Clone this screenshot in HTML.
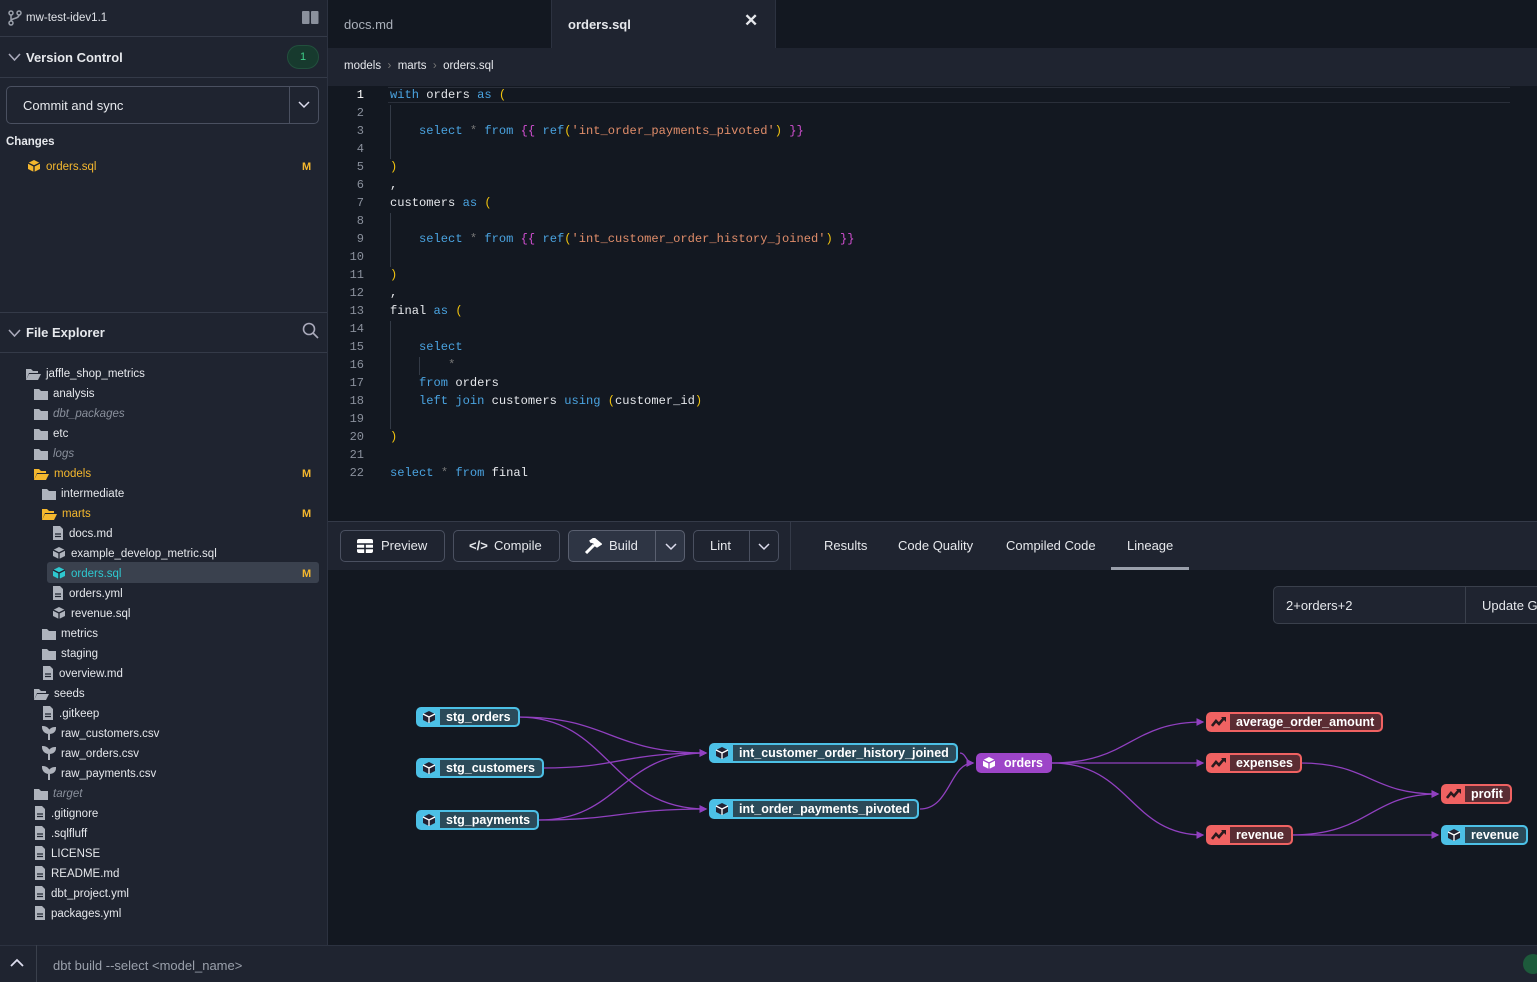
<!DOCTYPE html>
<html><head><meta charset="utf-8"><style>
*{box-sizing:border-box;margin:0;padding:0}
body{width:1537px;height:982px;overflow:hidden;background:#131821;font-family:"Liberation Sans",sans-serif;color:#e6e8ec;position:relative;font-size:12px}
.abs{position:absolute}
#side{left:0;top:0;width:328px;height:945px;background:#1f2430;border-right:1px solid #2c3240}
.hr{position:absolute;left:0;width:327px;height:1px;background:#343a48}
.row{position:absolute;height:20px;line-height:20px;font-size:11.5px;color:#e6e8ec;white-space:nowrap}
.row svg{vertical-align:-3px;margin-right:5px}
.M{position:absolute;left:302px;color:#f5b82e;font-weight:bold;font-size:11px}
.code{position:absolute;left:390px;font-family:"Liberation Mono",monospace;font-size:12.1px;white-space:pre;color:#e6e8ec}
.ln{position:absolute;width:34px;left:330px;text-align:right;font-family:"Liberation Mono",monospace;font-size:12px;color:#8a909c}
.k{color:#4aa3e0}.y{color:#f2c40f}.p{color:#d14fd1}.s{color:#e08d6a}.g{color:#777}
.btn{position:absolute;top:530px;height:32px;border:1px solid #4a5060;border-radius:5px;font-size:13px;line-height:30px;color:#e6e8ec}
.node{position:absolute;height:20px;border-radius:5px;border:2px solid;display:flex;font-weight:bold;font-size:12.5px;color:#fff;overflow:hidden}
.node .i{width:22px;display:flex;align-items:center;justify-content:center}
.node .t{padding:0 7px 0 6px;line-height:16px;border-radius:0 3px 3px 0}
.b{border-color:#4cc0e6;background:#4cc0e6}.b .t{background:#2b4a59}
.r{border-color:#f06262;background:#f06262}.r .t{background:#5a2c33}
.tab{position:absolute;top:538px;font-size:13px;color:#e6e8ec}
</style></head><body>
<div id="side" class="abs">
 <svg class="abs" style="left:8px;top:10px" width="14" height="16" viewBox="0 0 14 16" fill="none" stroke="#9aa0ab" stroke-width="1.5"><circle cx="3" cy="3" r="2"/><circle cx="3" cy="13" r="2"/><circle cx="11" cy="3" r="2"/><path d="M3 5v6M11 5c0 4-8 3-8 6"/></svg>
 <div class="abs" style="left:26px;top:12px;font-size:11.5px;color:#dfe2e7">mw-test-idev1.1</div>
 <svg class="abs" style="left:302px;top:11px" width="17" height="13"><rect x="0" y="0" width="7.5" height="13" rx="1" fill="#8a909c"/><rect x="9" y="0" width="7.5" height="13" rx="1" fill="#8a909c"/></svg>
 <div class="hr" style="top:36px"></div>
 <svg class="abs" style="left:8px;top:53px" width="13" height="9"><path d="M1 1l5.5 6L12 1" stroke="#aab" stroke-width="1.6" fill="none"/></svg>
 <div class="abs" style="left:26px;top:50px;font-size:13px;font-weight:bold">Version Control</div>
 <div class="abs" style="left:287px;top:45px;width:32px;height:24px;border-radius:12px;background:#173a2e;border:1px solid #22503d;color:#3fd08a;font-size:11px;text-align:center;line-height:22px">1</div>
 <div class="hr" style="top:77px"></div>
 <div class="abs" style="left:6px;top:86px;width:313px;height:38px;border:1px solid #4a5060;border-radius:5px"></div>
 <div class="abs" style="left:23px;top:98px;font-size:13px">Commit and sync</div>
 <div class="abs" style="left:289px;top:87px;width:1px;height:36px;background:#4a5060"></div>
 <svg class="abs" style="left:298px;top:101px" width="12" height="8"><path d="M1 1l5 5 5-5" stroke="#dde" stroke-width="1.5" fill="none"/></svg>
 <div class="abs" style="left:6px;top:136px;font-size:11.5px;font-weight:bold">Changes</div>
 <div class="row" style="left:27px;top:157px;color:#f5b82e"><svg width="14" height="14" viewBox="0 0 14 14"><path d="M7 1l6 3v6l-6 3-6-3V4z" fill="#f5b82e"/><path d="M1 4l6 3 6-3M7 7v6" stroke="#1f2430" stroke-width="1.3" fill="none"/></svg>orders.sql</div>
 <div class="M" style="top:161px">M</div>
 <div class="hr" style="top:312px"></div>
 <svg class="abs" style="left:8px;top:329px" width="13" height="9"><path d="M1 1l5.5 6L12 1" stroke="#aab" stroke-width="1.6" fill="none"/></svg>
 <div class="abs" style="left:26px;top:325px;font-size:13px;font-weight:bold">File Explorer</div>
 <svg class="abs" style="left:302px;top:322px" width="17" height="17"><circle cx="7" cy="7" r="5.5" stroke="#aab" stroke-width="1.6" fill="none"/><path d="M11 11l5 5" stroke="#aab" stroke-width="1.6"/></svg>
 <div class="hr" style="top:352px"></div>
 <div class="abs" style="left:47px;top:562px;width:272px;height:21px;background:#3a414e;border-radius:3px"></div>
 <div id="tree"></div>
 <div class="M" style="top:468px">M</div><div class="M" style="top:508px">M</div><div class="M" style="top:568px">M</div>
</div>
<div class="abs" style="left:0;top:945px;width:1537px;height:37px;background:#1f2430;border-top:1px solid #2c3240"></div>
<div class="abs" style="left:36px;top:945px;width:1px;height:37px;background:#3a404c"></div>
<svg class="abs" style="left:10px;top:958px" width="14" height="9"><path d="M1 8l6-6 6 6" stroke="#dde" stroke-width="1.8" fill="none"/></svg>
<div class="abs" style="left:53px;top:958px;font-size:13px;color:#9aa0ab">dbt build --select &lt;model_name&gt;</div>
<div class="abs" style="left:1523px;top:954px;width:20px;height:20px;border-radius:10px;background:#1d5a3b"></div>
<div class="abs" style="left:328px;top:0;width:1209px;height:48px;background:#131821"></div>
<div class="abs" style="left:344px;top:17px;font-size:13px;color:#aab0ba">docs.md</div>
<div class="abs" style="left:551px;top:0;width:225px;height:48px;background:#1f2430;border-left:1px solid #2c3240;border-right:1px solid #2c3240"></div>
<div class="abs" style="left:568px;top:17px;font-size:13px;font-weight:bold">orders.sql</div>
<div class="abs" style="left:744px;top:11px;font-size:17px;font-weight:bold">✕</div>
<div class="abs" style="left:328px;top:48px;width:1209px;height:38px;background:#1f2430"></div>
<div class="abs" style="left:344px;top:60px;font-size:11.5px">models <span style="color:#777">&nbsp;›&nbsp;</span> marts <span style="color:#777">&nbsp;›&nbsp;</span> orders.sql</div>
<div class="abs" style="left:388px;top:87px;width:1122px;height:16px;border-top:1px solid #2a2f3a;border-bottom:1px solid #2a2f3a"></div>
<div class="abs" style="left:390px;top:105px;width:1px;height:54px;background:#333a46"></div>
<div class="abs" style="left:390px;top:213px;width:1px;height:54px;background:#333a46"></div>
<div class="abs" style="left:390px;top:321px;width:1px;height:108px;background:#333a46"></div>
<div class="abs" style="left:419px;top:357px;width:1px;height:18px;background:#333a46"></div>
<div id="code"></div>
<div class="abs" style="left:328px;top:521px;width:1209px;height:49px;background:#1f2430;border-top:1px solid #343a48"></div>
<div class="abs" style="left:790px;top:522px;width:1px;height:48px;background:#343a48"></div>
<div class="btn" style="left:340px;width:105px;padding-left:40px"><svg class="abs" style="left:16px;top:8px" width="16" height="14"><rect width="16" height="14" rx="2" fill="#fff"/><path d="M0 5h16M0 9.5h16M8 5v9" stroke="#1f2430" stroke-width="1.6"/></svg>Preview</div>
<div class="btn" style="left:453px;width:107px;padding-left:40px"><span class="abs" style="left:15px;top:0;font-size:13px;font-weight:bold">&lt;/&gt;</span>Compile</div>
<div class="btn" style="left:568px;width:117px;background:#2e3544;border-color:#5a6070;padding-left:40px"><svg class="abs" style="left:15px;top:7px" width="18" height="16"><path d="M2 15l8-8M6 4l4-3 6 5-3 2-3-2" stroke="#fff" stroke-width="3" fill="#fff"/></svg>Build<div class="abs" style="left:86px;top:0;width:1px;height:30px;background:#5a6070"></div><svg class="abs" style="left:96px;top:12px" width="12" height="8"><path d="M1 1l5 5 5-5" stroke="#dde" stroke-width="1.5" fill="none"/></svg></div>
<div class="btn" style="left:693px;width:86px;padding-left:16px">Lint<div class="abs" style="left:55px;top:0;width:1px;height:30px;background:#4a5060"></div><svg class="abs" style="left:64px;top:12px" width="12" height="8"><path d="M1 1l5 5 5-5" stroke="#dde" stroke-width="1.5" fill="none"/></svg></div>
<div class="tab" style="left:824px">Results</div>
<div class="tab" style="left:898px">Code Quality</div>
<div class="tab" style="left:1006px">Compiled Code</div>
<div class="tab" style="left:1127px">Lineage</div>
<div class="abs" style="left:1111px;top:567px;width:78px;height:3px;background:#9aa0ab"></div>
<div class="abs" style="left:1273px;top:586px;width:280px;height:38px;border:1px solid #3a404c;border-radius:5px;background:#1f2430"></div>
<div class="abs" style="left:1465px;top:587px;width:1px;height:36px;background:#3a404c"></div>
<div class="abs" style="left:1286px;top:598px;font-size:13px">2+orders+2</div>
<div class="abs" style="left:1482px;top:598px;font-size:13px;white-space:nowrap">Update Graph</div>
<svg class="abs" style="left:0;top:0" width="1537" height="982" fill="none" stroke="#9140c0" stroke-width="1.3">
<defs><marker id="a" markerWidth="6" markerHeight="6" refX="5" refY="3" orient="auto"><path d="M0 0L6 3 0 6z" fill="#9140c0" stroke="none"/></marker></defs>
<g marker-end="url(#a)">
<path d="M518 717C610 717 610 753 706 753"/>
<path d="M518 717C610 717 610 809 706 809"/>
<path d="M543 768C620 768 620 753 706 753"/>
<path d="M539 820C620 820 620 753 706 753"/>
<path d="M539 820C620 820 620 809 706 809"/>
<path d="M960 753C966 753 966 763 973 763"/>
<path d="M920 809C950 809 950 763 973 763"/>
<path d="M1052 763C1130 763 1130 722 1203 722"/>
<path d="M1052 763H1203"/>
<path d="M1052 763C1130 763 1130 835 1203 835"/>
<path d="M1300 763C1370 763 1370 794 1438 794"/>
<path d="M1291 835C1370 835 1370 794 1438 794"/>
<path d="M1291 835H1438"/>
</g></svg>
<div id="nodes"></div>
<script>
var t=[[26,372,'jaffle_shop_metrics','fo',''],[34,392,'analysis','f',''],[34,412,'dbt_packages','f','i'],[34,432,'etc','f',''],[34,452,'logs','f','i'],[34,472,'models','fo','o'],[42,492,'intermediate','f',''],[42,512,'marts','fo','o'],[52,532,'docs.md','d',''],[52,552,'example_develop_metric.sql','c',''],[52,572,'orders.sql','c','c'],[52,592,'orders.yml','d',''],[52,612,'revenue.sql','c',''],[42,632,'metrics','f',''],[42,652,'staging','f',''],[42,672,'overview.md','d',''],[34,692,'seeds','fo',''],[42,712,'.gitkeep','d',''],[42,732,'raw_customers.csv','s',''],[42,752,'raw_orders.csv','s',''],[42,772,'raw_payments.csv','s',''],[34,792,'target','f','i'],[34,812,'.gitignore','d',''],[34,832,'.sqlfluff','d',''],[34,852,'LICENSE','d',''],[34,872,'README.md','d',''],[34,892,'dbt_project.yml','d',''],[34,912,'packages.yml','d','']];
var h='';t.forEach(function(r){var col=r[4]=='o'?'#f5b82e':r[4]=='c'?'#2ec8d0':'#aeb3bc';var tc=r[4]=='o'?'#f5b82e':r[4]=='c'?'#2ec8d0':r[4]=='i'?'#8a909c':'#e6e8ec';var ic;
if(r[3]=='f')ic='<svg width="14" height="12"><path d="M0 1h5l2 2h7v9H0z" fill="'+col+'"/></svg>';
else if(r[3]=='fo')ic='<svg width="15" height="12"><path d="M0 1h5l2 2h5v2H3L0 12z" fill="'+col+'"/><path d="M3 6h12l-3 6H0z" fill="'+col+'"/></svg>';
else if(r[3]=='d')ic='<svg width="12" height="14"><path d="M1 0h7l3 3v11H1z" fill="'+col+'"/><path d="M3 8h6M3 10.5h6" stroke="#1f2430" stroke-width="1.2"/></svg>';
else if(r[3]=='s')ic='<svg width="14" height="14"><path d="M7 14V7M7 7C7 3 4 1 1 1c0 3 2 6 6 6M7 7c0-3 3-5 6-5 0 3-2 5-6 5" stroke="'+col+'" stroke-width="2" fill="'+col+'"/></svg>';
else ic='<svg width="14" height="14" viewBox="0 0 14 14"><path d="M7 1l6 3v6l-6 3-6-3V4z" fill="'+col+'"/><path d="M1 4l6 3 6-3M7 7v6" stroke="#1f2430" stroke-width="1.3" fill="none"/></svg>';
h+='<div class="row" style="left:'+r[0]+'px;top:'+(r[1]-8)+'px;color:'+tc+(r[4]=='i'?';font-style:italic':'')+'">'+ic+r[2]+'</div>';});
document.getElementById('tree').innerHTML=h;
var c=['<span class="k">with</span> orders <span class="k">as</span> <span class="y">(</span>','','    <span class="k">select</span> <span class="g">*</span> <span class="k">from</span> <span class="p">{{</span> <span class="k">ref</span><span class="y">(</span><span class="s">\'int_order_payments_pivoted\'</span><span class="y">)</span> <span class="p">}}</span>','','<span class="y">)</span>',',','customers <span class="k">as</span> <span class="y">(</span>','','    <span class="k">select</span> <span class="g">*</span> <span class="k">from</span> <span class="p">{{</span> <span class="k">ref</span><span class="y">(</span><span class="s">\'int_customer_order_history_joined\'</span><span class="y">)</span> <span class="p">}}</span>','','<span class="y">)</span>',',','final <span class="k">as</span> <span class="y">(</span>','','    <span class="k">select</span>','        <span class="g">*</span>','    <span class="k">from</span> orders','    <span class="k">left join</span> customers <span class="k">using</span> <span class="y">(</span>customer_id<span class="y">)</span>','','<span class="y">)</span>','','<span class="k">select</span> <span class="g">*</span> <span class="k">from</span> final'];
h='';c.forEach(function(l,i){var y=88+i*18;h+='<div class="ln" style="top:'+y+'px;'+(i==0?'color:#fff':'')+'">'+(i+1)+'</div><div class="code" style="top:'+y+'px">'+l+'</div>';});
document.getElementById('code').innerHTML=h;
var cube='<svg width="14" height="14" viewBox="0 0 14 14"><path d="M7 1l6 3v6l-6 3-6-3V4z" fill="#223"/><path d="M1 4l6 3 6-3M7 7v6" stroke="#fff" stroke-width="1.3" fill="none"/></svg>';
var wave='<svg width="16" height="12"><path d="M1 10l4-5 3 3 5-6" stroke="#2a1a1e" stroke-width="2.6" fill="none"/><path d="M10 1h5v5z" fill="#2a1a1e"/></svg>';
var N=[['b',416,717,'stg_orders'],['b',416,768,'stg_customers'],['b',416,820,'stg_payments'],['b',709,753,'int_customer_order_history_joined'],['b',709,809,'int_order_payments_pivoted'],['r',1206,722,'average_order_amount'],['r',1206,763,'expenses'],['r',1206,835,'revenue'],['r',1441,794,'profit'],['b',1441,835,'revenue']];
h='';N.forEach(function(n){h+='<div class="node '+n[0]+'" style="left:'+n[1]+'px;top:'+(n[2]-10)+'px"><div class="i">'+(n[0]=='b'?cube:wave)+'</div><div class="t">'+n[3]+'</div></div>';});
h+='<div class="node" style="left:976px;top:753px;border-color:#9d45c8;background:#9d45c8;width:76px"><div class="i"><svg width="14" height="14" viewBox="0 0 14 14"><path d="M7 1l6 3v6l-6 3-6-3V4z" fill="#fff"/><path d="M1 4l6 3 6-3M7 7v6" stroke="#9d45c8" stroke-width="1.3" fill="none"/></svg></div><div class="t" style="padding-left:4px">orders</div></div>';
document.getElementById('nodes').innerHTML=h;
</script>
</body></html>
